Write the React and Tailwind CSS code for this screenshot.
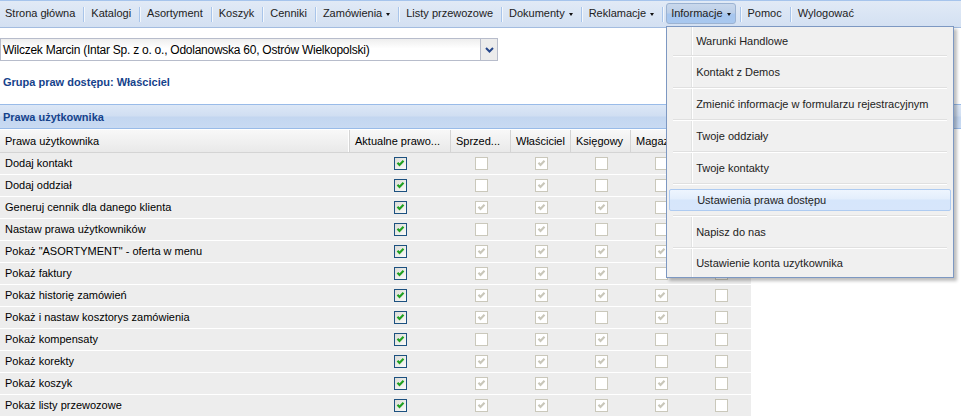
const NAV = [
  { label: 'Strona główna' },
  { label: 'Katalogi' },
  { label: 'Asortyment' },
  { label: 'Koszyk' },
  { label: 'Cenniki' },
  { label: 'Zamówienia', arrow: true },
  { label: 'Listy przewozowe' },
  { label: 'Dokumenty', arrow: true },
  { label: 'Reklamacje', arrow: true },
  { label: 'Informacje', arrow: true, active: true },
  { label: 'Pomoc' },
  { label: 'Wylogować' },
];

const MENU = [
  'Warunki Handlowe',
  'Kontakt z Demos',
  'Zmienić informacje w formularzu rejestracyjnym',
  'Twoje oddziały',
  'Twoje kontakty',
  'Ustawienia prawa dostępu',
  'Napisz do nas',
  'Ustawienie konta uzytkownika',
];

const COLS = [
  { label: 'Aktualne prawo...', w: 'w-[101px]' },
  { label: 'Sprzed...', w: 'w-[60px]' },
  { label: 'Właściciel', w: 'w-[60px]' },
  { label: 'Księgowy', w: 'w-[60px]' },
  { label: 'Magazynier', w: 'w-[60px]' },
  { label: 'Klient', w: 'w-[60px]' },
];

const ROWS = [
  ['Dodaj kontakt', [0, 1, 0, 0, 0]],
  ['Dodaj oddział', [0, 1, 0, 0, 0]],
  ['Generuj cennik dla danego klienta', [1, 1, 1, 0, 0]],
  ['Nastaw prawa użytkowników', [0, 1, 0, 0, 0]],
  ['Pokaż "ASORTYMENT" - oferta w menu', [1, 1, 1, 1, 0]],
  ['Pokaż faktury', [1, 1, 1, 0, 0]],
  ['Pokaż historię zamówień', [1, 1, 1, 1, 0]],
  ['Pokaż i nastaw kosztorys zamówienia', [1, 1, 0, 1, 0]],
  ['Pokaż kompensaty', [0, 1, 1, 0, 0]],
  ['Pokaż korekty', [1, 1, 1, 0, 0]],
  ['Pokaż koszyk', [1, 1, 0, 1, 0]],
  ['Pokaż listy przewozowe', [1, 1, 1, 1, 0]],
];

const Tick = ({ color }) => (
  <svg width="13" height="13" viewBox="0 0 13 13" className="absolute -left-px -top-px">
    <polyline points="3.5,5.8 5.5,8 9.5,3.8" fill="none" stroke={color} strokeWidth="2.2" />
  </svg>
);

const Box = ({ checked, active }) =>
  active ? (
    <span className="relative block w-[13px] h-[13px] border border-[#1c5180] bg-[linear-gradient(135deg,#dcdcd7,#fbfbf9)]">
      {checked && <Tick color="#21a121" />}
    </span>
  ) : (
    <span className="relative block w-[13px] h-[13px] border border-[#cac8bb] bg-white">
      {checked && <Tick color="#c9c7ba" />}
    </span>
  );

const Arrow = () => (
  <span className="ml-[4px] mt-[1px] inline-block border-x-[2.5px] border-t-[3px] border-x-transparent border-t-[#111]" />
);

function Menu() {
  return (
    <div className="absolute -left-px top-[22px] z-10 w-[288px] border border-[#7d98c2] bg-[#f0f0f0] shadow-[3px_3px_3px_rgba(0,0,0,0.25)]">
      {MENU.map((m, i) => {
        const h = i === 0 || i === MENU.length - 1 ? 'h-[28px]' : 'h-[30px]';
        return (
          <div key={m}>
            {i === 5 ? (
              <div className={`${h} px-[2px] py-[4px]`}>
                <div className="h-full flex items-center pl-[27px] rounded-[2px] border border-[#aecbf1] bg-[linear-gradient(#eef5fe,#e3eefc_45%,#d6e6fb_50%,#d7e6fb)]">
                  {m}
                </div>
              </div>
            ) : (
              <div className={`${h} flex`}>
                <div className="w-[25px] border-r border-[#e2e3e3] shadow-[1px_0_0_#fff]" />
                <div className="flex items-center pl-[4px]">{m}</div>
              </div>
            )}
            {i < MENU.length - 1 && <div className="mx-[6px] h-[2px] border-t border-[#e0e0e0] border-b border-b-white" />}
          </div>
        );
      })}
    </div>
  );
}

export default function App() {
  return (
    <div className="w-[961px] h-[417px] overflow-hidden bg-white text-[11px] text-black font-['Liberation_Sans',Arial,sans-serif]">
      {/* Nav */}
      <div className="h-[28px] border-t border-[#a6c4ec] border-b border-b-[#a3bce0] bg-[linear-gradient(#e1eaf6,#d3e0f2)] pt-[2px] pl-px flex items-start">
        {NAV.map((n, i) => (
          <div key={n.label} className="flex items-center">
            {i > 0 && <div className="ml-[4px] mr-[3px] mt-[1px] h-[15px] w-px bg-[#a9c5ea] shadow-[1px_0_0_#f3f7fc]" />}
            <div
              className={
                'relative h-[21px] flex items-center px-[4px] text-[#222] ' +
                (n.active
                  ? 'rounded-[3px] border border-[#9cb3d2] bg-[linear-gradient(#c9d8ec,#bccfe8_48%,#a6c6ef_52%,#a9c8ef)]'
                  : '')
              }
            >
              {n.label}
              {n.arrow && <Arrow />}
              {n.active && <Menu />}
            </div>
          </div>
        ))}
      </div>

      {/* Select */}
      <div className="mt-[10px] w-[498px] h-[23px] flex border border-[#b7bccb] bg-[linear-gradient(#eeeeee,#ffffff_45%)]">
        <div className="flex-1 flex items-center pl-[2px] text-[12px] tracking-[-0.25px] text-black">
          Wilczek Marcin (Intar Sp. z o. o., Odolanowska 60, Ostrów Wielkopolski)
        </div>
        <div className="w-[17px] flex items-center justify-center border-l border-[#b7bccb] bg-[#ececec]">
          <svg width="9" height="6" viewBox="0 0 9 6">
            <polyline points="1,1 4.5,4.5 8,1" fill="none" stroke="#25468a" strokeWidth="2" />
          </svg>
        </div>
      </div>

      <div className="mt-[15px] pl-[3px] leading-[13px] font-bold text-[#15428b]">Grupa praw dostępu: Właściciel</div>

      {/* Panel header */}
      <div className="mt-[15px] h-[25px] border-y border-[#99bbe8] bg-[linear-gradient(#dce7f6,#d0def2_48%,#c3d6f0_52%,#c8daf2)] flex items-end pb-[3px] pl-[3px] font-bold text-[#15428b]">
        Prawa użytkownika
      </div>

      {/* Table */}
      <div className="w-[751px]">
        <div className="h-[24px] flex border-t border-white border-b border-b-[#d4d4d4] bg-[linear-gradient(#f8f8f8,#e9e9e9)]">
          <div className="w-[350px] flex items-center pl-[5px] border-r border-[#d4d4d4] shadow-[inset_-1px_0_0_#fff]">
            Prawa użytkownika
          </div>
          {COLS.map((c) => (
            <div key={c.label} className={`${c.w} flex items-center pl-[5px] border-r border-[#d4d4d4] overflow-hidden whitespace-nowrap`}>
              {c.label}
            </div>
          ))}
        </div>
        {ROWS.map(([label, vals]) => (
          <div key={label} className="h-[22px] flex border-b border-white bg-[#ededed]">
            <div className="w-[350px] flex items-center pl-[5px]">{label}</div>
            <div className="w-[101px] flex items-center justify-center">
              <Box checked active />
            </div>
            {vals.map((v, j) => (
              <div key={j} className="w-[60px] flex items-center justify-center">
                <Box checked={!!v} />
              </div>
            ))}
          </div>
        ))}
      </div>
    </div>
  );
}
